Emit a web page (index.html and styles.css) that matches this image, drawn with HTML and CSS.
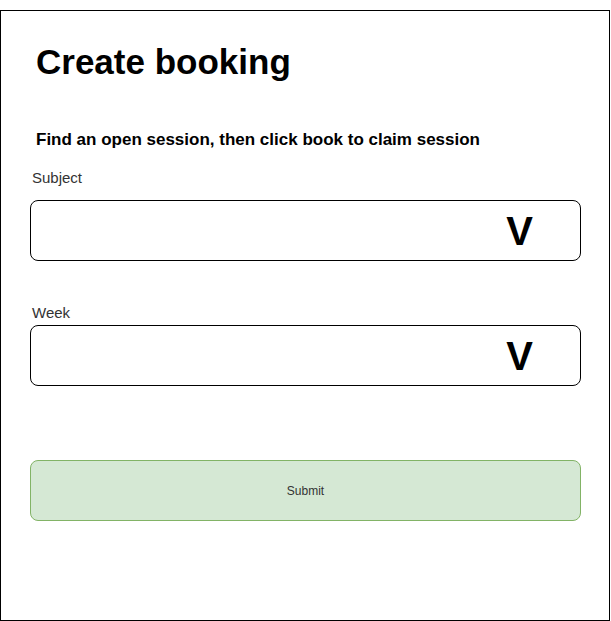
FILE: index.html
```html
<!DOCTYPE html>
<html>
<head>
<meta charset="utf-8">
<link rel="stylesheet" href="styles.css">
</head>
<body>
<div class="frame">
  <h1 class="title">Create booking</h1>
  <p class="subtitle">Find an open session, then click book to claim session</p>
  <div class="field field-subject">
    <div class="label">Subject</div>
    <div class="select"><span class="caret">V</span></div>
  </div>
  <div class="field field-week">
    <div class="label">Week</div>
    <div class="select"><span class="caret">V</span></div>
  </div>
  <div class="submit">Submit</div>
</div>
</body>
</html>
```
FILE: styles.css
```css
html, body {
  margin: 0;
  padding: 0;
  background: #fff;
}
body {
  font-family: "Liberation Sans", Arial, sans-serif;
  color: #000;
}
.frame {
  margin-top: 10px;
  width: 610px;
  height: 611px;
  box-sizing: border-box;
  border: 1px solid #000;
  padding: 33px 0 0 29px;
}
.title {
  margin: 0 0 0 6px;
  font-size: 35px;
  line-height: 35px;
  font-weight: bold;
}
.subtitle {
  margin: 52px 0 0 6px;
  font-size: 17px;
  line-height: 17px;
  font-weight: bold;
}
.field {
  display: flex;
  flex-direction: column;
}
.field-subject {
  margin-top: 22px;
}
.field-subject .label {
  margin-bottom: 15px;
}
.field-week {
  margin-top: 44px;
}
.field-week .label {
  margin-bottom: 5px;
}
.label {
  margin-left: 2px;
  font-size: 15px;
  line-height: 15px;
  color: #333;
}
.select {
  width: 551px;
  height: 61px;
  box-sizing: border-box;
  border: 1px solid #000;
  border-radius: 8px;
  display: flex;
  align-items: center;
  justify-content: flex-end;
  padding-right: 47px;
}
.caret {
  font-size: 40px;
  line-height: 40px;
  font-weight: bold;
}
.submit {
  margin-top: 74px;
  width: 551px;
  height: 61px;
  box-sizing: border-box;
  border: 1px solid #82b366;
  border-radius: 8px;
  background: #d5e8d4;
  display: flex;
  align-items: center;
  justify-content: center;
  font-size: 12px;
  color: #333;
}
```
